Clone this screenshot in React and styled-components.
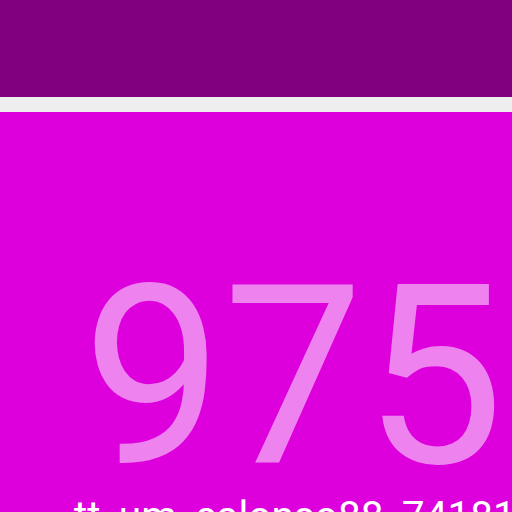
import React from 'react';
import styled, {createGlobalStyle} from 'styled-components';

const GlobalStyle = createGlobalStyle`
  html, body {
    margin: 0;
    padding: 0;
    width: 512px;
    height: 512px;
    overflow: hidden;
    font-family: Roboto, "Liberation Sans", sans-serif;
  }
`;

function App() {
  return (
    <>
      <GlobalStyle />
      <Page>
        <Header />
        <Divider />
        <Main>
          <Count>975</Count>
          <Caption>tt_um_calonso88_74181</Caption>
        </Main>
      </Page>
    </>
  );
}

const Page = styled.div`
  display: flex;
  flex-direction: column;
  width: 512px;
  height: 512px;
  overflow: hidden;
`;

const Header = styled.header`
  height: 97px;
  background: #800080;
  flex-shrink: 0;
`;

const Divider = styled.div`
  height: 15px;
  background: #eeeeee;
  flex-shrink: 0;
`;

const Main = styled.main`
  flex: 1;
  background: #dd00dd;
  display: flex;
  flex-direction: column;
  padding-top: 166px;
  overflow: hidden;
`;

const Count = styled.div`
  font-size: 250px;
  line-height: 200px;
  color: #ee82ee;
  text-align: right;
  padding-right: 8px;
  white-space: nowrap;
`;

const Caption = styled.div`
  margin-top: 18px;
  padding-left: 74px;
  font-size: 40.6px;
  line-height: 40px;
  color: #ffffff;
  white-space: nowrap;
`;

export default App;
